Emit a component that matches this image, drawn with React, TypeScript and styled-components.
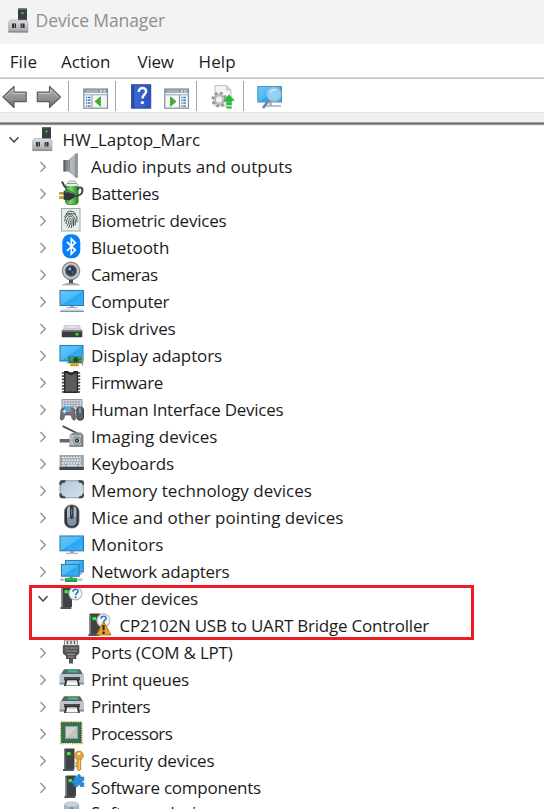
import React from "react";
import styled, { createGlobalStyle } from "styled-components";

const GlobalStyle = createGlobalStyle`
  * { box-sizing: border-box; }
  body { margin: 0; background: #fff; overflow: hidden; }
`;

const Window = styled.div`
  width: 544px;
  height: 809px;
  overflow: hidden;
  background: #fff;
  color: #1c1c1c;
  font: 17px/27px "Open Sans", "Noto Sans", sans-serif;
  display: flex;
  flex-direction: column;
  svg { display: block; flex: none; overflow: visible; }
`;

const TitleBar = styled.header`
  height: 44px;
  flex: none;
  display: flex;
  gap: 7.6px;
  padding-left: 8px;
  background: #f3f3f3;
`;

const Title = styled.h1`
  margin: 0;
  font-size: 17.5px;
  font-weight: 400;
  line-height: 41px;
  letter-spacing: -0.1px;
  color: #8e8e8e;
`;

const MenuBar = styled.nav`
  height: 34px;
  flex: none;
  display: flex;
  line-height: 35px;
  border-bottom: 1px solid #d6d8da;
`;

const MenuItem = styled.span<{ $gap: number; $width: number; $ls: number }>`
  margin-left: ${(p) => p.$gap}px;
  width: ${(p) => p.$width}px;
  letter-spacing: ${(p) => p.$ls}px;
  white-space: nowrap;
`;

const Toolbar = styled.div`
  height: 34px;
  flex: none;
  display: flex;
  border-top: 1px solid #c3c6c9;
`;

const Tool = styled.span<{ $gap: number }>`
  margin-left: ${(p) => p.$gap}px;
`;

const Separator = styled.span<{ $gap: number }>`
  width: 1px;
  height: 30px;
  margin: 2px 0 0 ${(p) => p.$gap}px;
  background: #a9a9a9;
`;

const Band = styled.div`
  height: 14px;
  flex: none;
  background: linear-gradient(#e3e3e3 0 1px, #f0f0f0 1px 10px, #a2a2a2 10px 11px, #707070 11px 12px, #929292 12px 13px, #f0f0f0 13px);
`;

const Tree = styled.div`
  display: flex;
  flex-direction: column;
`;

const Row = styled.div<{ $level: number }>`
  height: 27px;
  flex: none;
  display: flex;
  padding-left: ${(p) => [7, 36, 64][p.$level]}px;
  &:last-child { line-height: 24px; }
`;

const Label = styled.span<{ $ls: number; $indent: number }>`
  margin-left: ${(p) => p.$indent}px;
  letter-spacing: ${(p) => p.$ls}px;
  white-space: nowrap;
`;

const Group = styled.div`
  position: relative;
`;

const Highlight = styled.div`
  position: absolute;
  left: 29px;
  top: 0;
  width: 445px;
  height: 55px;
  border: 3px solid #ed1c24;
`;

const HiddenSvg = styled.svg`
  position: absolute;
`;

const Chevron = ({ open }: { open?: boolean }) => (
  <svg width="14" height="27" fill="none" stroke={open ? "#404040" : "#969696"} strokeWidth="1.5">
    <path d={open ? "M2.5 11.3l4.5 4.7 4.5-4.7" : "M4.5 9l4.7 4.9-4.7 4.9"} />
  </svg>
);

const Defs = () => (
  <HiddenSvg width="0" height="0">
    <defs>
      <linearGradient id="screen" x1="0" y1="0" x2="1" y2="1">
        <stop offset="0" stopColor="#66c6fb" /><stop offset=".5" stopColor="#4ab9fa" /><stop offset=".52" stopColor="#2ba7f6" /><stop offset="1" stopColor="#38b2fa" />
      </linearGradient>
      <linearGradient id="metal" x1="0" y1="0" x2="1" y2="0">
        <stop offset="0" stopColor="#7a7f84" /><stop offset=".5" stopColor="#b9bec3" /><stop offset="1" stopColor="#6e7479" />
      </linearGradient>
      <linearGradient id="plate" x1="0" y1="0" x2="0" y2="1">
        <stop offset="0" stopColor="#dddde1" /><stop offset="1" stopColor="#a4a5aa" />
      </linearGradient>
      <linearGradient id="arrow" x1="0" y1="0" x2="0" y2="1">
        <stop offset="0" stopColor="#aaa" /><stop offset=".5" stopColor="#969696" /><stop offset="1" stopColor="#707070" />
      </linearGradient>
      <linearGradient id="green" x1="0" y1="0" x2="1" y2="0">
        <stop offset="0" stopColor="#2b9b21" /><stop offset=".4" stopColor="#7add64" /><stop offset="1" stopColor="#1e8617" />
      </linearGradient>
      <linearGradient id="help" x1="0" y1="0" x2="1" y2="0">
        <stop offset="0" stopColor="#2745a8" /><stop offset=".2" stopColor="#3d67d4" /><stop offset="1" stopColor="#2c4fc0" />
      </linearGradient>
      <linearGradient id="pad" x1="0" y1="0" x2="1" y2="1">
        <stop offset="0" stopColor="#afc5d5" /><stop offset="1" stopColor="#d3e4ee" />
      </linearGradient>
    </defs>
  </HiddenSvg>
);

const Adapter = () => (
  <g>
    <rect x="11" y="1" width="9" height="12" fill="#3b3d3f" />
    <rect x="11" y="1" width="9" height="1.3" fill="#66696b" />
    <rect x="14.5" y="4.5" width="2" height="2" fill="#35cf42" />
    <path d="M3.2 12.5h16.2l1.6 2.5v9.7H1.6V15z" fill="url(#plate)" stroke="#97989d" strokeWidth=".5" />
    <path d="M1.6 23.5H21v1.4H1.6z" fill="#8c8d93" />
    <rect x="5" y="16" width="4" height="4.5" fill="#303136" />
    <rect x="13.6" y="16" width="4" height="4.5" fill="#303136" />
    <path d="M7.4 16v4.5M15.2 16v4.5" stroke="#999" strokeWidth=".9" />
  </g>
);

const Tower = ({ x = 0 }: { x?: number }) => (
  <g transform={`translate(${x} 0)`}>
    <path d="M1.5 2.5l1-1H12V22H1.5z" fill="#404346" />
    <path d="M1.5 2.5L3 3.5V22H1.5z" fill="#77797b" />
    <path d="M.5 22h10.8v2H.5z" fill="#505356" />
    <rect x="4.5" y="5" width="3.6" height="3.2" fill="#35ed3c" />
  </g>
);

const Question = () => (
  <g>
    <circle cx="15.4" cy="8.4" r="6.5" fill="#f4f7fa" stroke="#b4b8bd" strokeWidth="1.1" />
    <path d="M13 6.7c.1-3.4 5.4-3.2 5.1-.3-.2 1.8-2.5 1.8-2.5 3.8" stroke="#287abf" strokeWidth="1.6" fill="none" />
    <circle cx="15.6" cy="12.3" r="1" fill="#287abf" />
  </g>
);

const Printer = () => (
  <g>
    <path d="M4 3.3h16l3.3 5.5H.7z" fill="#5d6268" />
    <path d="M8 4.6h9.5l1 2h-11z" fill="#29cf77" />
    <path d="M-.4 9q0-1 1.2-1h22.2q1 0 1 1v9.5H-.4z" fill="#b9c4ce" />
    <path d="M-.4 16.5h24.4v2H-.4z" fill="#8894a0" />
    <path d="M4 11h16v3.5H4z" fill="#46494d" />
    <path d="M5.5 13h13l1.4 7H4z" fill="#303336" />
    <path d="M7.2 14.5h9.6l1.2 5H6z" fill="#fafafa" />
    <path d="M8.5 14.5H16v1.6H8.5z" fill="#d0d2d4" />
  </g>
);

const Screen = ({ x, y, w, h }: { x: number; y: number; w: number; h: number }) => (
  <rect x={x} y={y} width={w} height={h} fill="url(#screen)" stroke="#347ca5" strokeWidth="1.1" />
);

const icons: Record<string, React.ReactNode> = {
  root: <g transform="translate(1 0)"><Adapter /></g>,
  audio: (
    <g>
      <path d="M3.5 7h5.2v11.5H3.5z" fill="#7e858b" />
      <path d="M3.5 7h2v11.5h-2z" fill="#596067" />
      <path d="M8.7 7l6.8-6.5h2.2v24h-2.2L8.7 18.5z" fill="url(#metal)" />
      <path d="M15.2.7h2.6v23.8h-2.6z" fill="#90979d" />
      <path d="M11 6v13" stroke="#d2d6d9" />
    </g>
  ),
  battery: (
    <g>
      <rect x="8" y="1" width="8" height="4" rx="2" fill="#efecf6" stroke="#a5a6ad" />
      <rect x="5.5" y="3.5" width="12.7" height="21" rx="3" fill="url(#green)" stroke="#4f7550" strokeWidth=".8" />
      <path d="M5.8 6q0-2.3 2.5-2.3h7.2q2.5 0 2.5 2.3z" fill="#e5edeb" />
      <path d="M14 16c6.5 0 8.5-2 8.5-5.500q0-3-2.300-3T18 10M2 1.500C3 4 3.500 5.500 6 8" fill="none" stroke="#41454a" strokeWidth="2" />
      <path d="M-.8 13.300h5M-.8 17.500h5" stroke="#a77809" strokeWidth="2.400" />
      <path d="M-.8 12.900h5M-.8 17.100h5" stroke="#edc438" />
      <path d="M3.700 11l5.200-.8 5.500 3v4.400l-5 3-5.700-.8z" fill="#343739" />
      <path d="M5 12l4-.5 4 2" stroke="#8c9093" strokeWidth="1.200" fill="none" />
    </g>
  ),
  finger: (
    <g>
      <rect x="1.5" y="1.5" width="18.5" height="22.5" fill="#e4eeec" stroke="#97a8a5" />
      <g fill="none" stroke="#444948" strokeWidth="1">
        <path d="M6 7.5c1.5-4.5 8.3-4.5 9.5 0M4.5 10.3C6 5 15.5 5 16.9 10.5v4.8" />
        <path d="M4.8 14.5c0-9 10.3-8.8 10.4-.5v4.3M5.5 17c2-2 .5-7.500 5-7.500 3.700 0 3.200 5.800 2.900 10" />
        <path d="M6.700 19.300c3-2.800 1-7.700 3.800-7.700 2.200 0 1.800 5 .7 9.400M8.400 20.800c2-2.300 1.700-4 2-7" />
      </g>
    </g>
  ),
  bluetooth: (
    <g>
      <rect x="2.3" y=".2" width="18" height="24.1" rx="8" fill="#087ff5" />
      <path d="M6.9 7.8l8.400 8.300-4 3.900V4.800l4 3.900-8.400 8.300" fill="none" stroke="#fff" strokeWidth="1.7" />
    </g>
  ),
  camera: (
    <g>
      <path d="M9 18h4v4H9z" fill="#4c4e51" />
      <path d="M3 23.3q8-3.3 16 0z" fill="#8e9194" />
      <path d="M2.4 23.2h17v1.2h-17z" fill="#a0a2a5" />
      <circle cx="11" cy="9.8" r="8.6" fill="#d0d2d4" stroke="#88898b" strokeWidth="1.4" />
      <circle cx="11" cy="9.8" r="5.6" fill="#3d4248" stroke="#686b6e" strokeWidth="1.2" />
      <circle cx="11" cy="9.8" r="3.1" fill="#203752" />
      <circle cx="9.8" cy="8" r="1.5" fill="#9ab5d2" />
      <circle cx="12.5" cy="11.2" r="1.1" fill="#467ab1" />
    </g>
  ),
  computer: (
    <g>
      <Screen x={0} y={2.5} w={23.5} h={15} />
      <path d="M10.5 18h3v1.5h-3z" fill="#8b9bab" />
      <path d="M6.5 19h11v1.2h-11z" fill="#9baabd" />
      <path d="M1.5 21.5h21l1.5 2.3H0z" fill="#b8cadb" />
      <path d="M0 23h24v1H0z" fill="#7993ad" />
    </g>
  ),
  disk: (
    <g>
      <path d="M4.5 10h15l2.8 6H1.8z" fill="#cbccd0" />
      <path d="M6 11h12l1 2H5z" fill="#dedfe2" />
      <path d="M1.8 15.5h20.5v6.8H1.8z" fill="#3a3d40" />
      <path d="M1.8 15.5h20.5v1.2H1.8z" fill="#797c7f" />
      <circle cx="17" cy="19.3" r="1.5" fill="#36df3b" />
    </g>
  ),
  display: (
    <g>
      <Screen x={0} y={3.5} w={23} h={15.5} />
      <path d="M6 19.8h3v1.5H6z" fill="#bdc6ce" />
      <path d="M8.5 14.5h14v6.8h-14z" fill="#26754b" />
      <path d="M10 16h4M10 18h3M18 16h4M19 19h3" stroke="#7bb779" />
      <rect x="13.7" y="15.8" width="4" height="3.8" fill="#174a32" />
      <path d="M22.6 13.5v10" stroke="#92969a" strokeWidth="1.3" />
      <path d="M10 21.3h9v2.8h-9z" fill="#eeb42c" />
      <path d="M12 21.3v3M14.2 21.3v3M16.4 21.3v3" stroke="#bb7a14" strokeWidth=".8" />
    </g>
  ),
  firmware: (
    <g>
      <path d="M2 4h18M2 7.2h18M2 10.4h18M2 13.6h18M2 16.8h18M2 20h18M2 23h18" stroke="#343434" strokeWidth="1.7" />
      <path d="M1.4 4h2M1.4 7.2h2M1.4 10.4h2M1.4 13.6h2M1.4 16.8h2M1.4 20h2M18.8 4h2M18.8 7.2h2M18.8 10.4h2M18.8 13.6h2M18.8 16.8h2M18.8 20h2" stroke="#878787" strokeWidth=".7" />
      <path d="M4 2h4.2q2.8 4.5 5.6 0H18v22H4z" fill="#262727" />
      <path d="M5.300 4.500h2.200q3.500 3.500 7 0h2.200v18H5.300z" fill="#5b5d5f" />
    </g>
  ),
  hid: (
    <g>
      <path d="M2 3.5h20v11H2z" fill="#cbd0d5" stroke="#8d969f" />
      <path d="M4 5.8h16M4 8.3h16M4 10.6h16" stroke="#8d98a2" strokeWidth="1.2" strokeDasharray="1.8 1" />
      <path d="M1 14q.8-2.5 4-2.5h6q3 0 3.8 2.5l.8 9q-1.5 2.5-3.2 0l-1.3-4H5l-1.4 4q-1.8 2.4-3.4 0z" fill="#67727c" stroke="#46505a" strokeWidth=".7" />
      <path d="M4.6 11h6.6v5H4.6z" fill="#48acf0" />
      <path d="M10 12.5l3.5 3.5-3 1z" fill="#e85832" />
      <path d="M4.3 13.5v4M2.5 15.5h4" stroke="#edf1f4" />
      <rect x="16.8" y="11" width="6.7" height="13.2" rx="3" fill="#59636e" stroke="#323b44" />
      <path d="M20 11v6" stroke="#b7c4d0" />
    </g>
  ),
  imaging: (
    <g>
      <path d="M3 2.2l18 9v1.8l-18.7-9z" fill="#484b4e" />
      <path d="M9.3 12h14v11.7h-14z" fill="#b9bcbf" />
      <path d="M9.3 12h14l-2-2.5h-8z" fill="#898d91" />
      <path d="M21.3 12h2v11.7h-14v-1.5h12z" fill="#777b7e" />
      <path d="M-.3 16h10v3.5h-10z" fill="#64676a" />
      <circle cx="17" cy="17.6" r="3.7" fill="#e1e3e5" stroke="#777b7f" />
      <circle cx="17" cy="17.6" r="2.3" fill="#263f42" />
      <circle cx="17" cy="17.6" r=".8" fill="#79c1a1" />
    </g>
  ),
  keyboard: (
    <g>
      <rect x="-.5" y="5" width="24.3" height="15" fill="#9da7b0" />
      <path d="M-.5 17h24.3v3H-.5z" fill="#414950" />
      <path d="M2 7.5h19.5M3 10.3h18M2 13h19.5" stroke="#eef1f2" strokeWidth="1.7" strokeDasharray="1.8 1" />
      <path d="M7 15.4h10M2 15.4h3M19 15.4h2.5" stroke="#e2e6e9" strokeWidth="1.2" />
    </g>
  ),
  memory: (
    <g>
      <rect x="0" y="3.7" width="23.3" height="17" rx="2" fill="url(#pad)" stroke="#8e999f" strokeWidth="1" />
      <path d="M-.5 8V5.500q0-2.200 2.400-2.200h4.100L4.500 6H2L1.500 8zM18 3.200h3.700q2.200 0 2.200 2.300V8L22 7.500V6h-2.500zM-.5 16.500V19q0 2.300 2.400 2.300h4.100l-1.700-2.600H2v-2.200zM18 21.300h3.500q2.400 0 2.400-2.300v-2.500L22 17v1.700h-2z" fill="#44494e" />
    </g>
  ),
  mouse: (
    <g>
      <rect x="4.5" y="1" width="14.5" height="23" rx="6.5" fill="#2e3338" stroke="#68717a" strokeWidth=".8" />
      <path d="M7 6q0-3.5 3-3.8V13H7zM13.5 2.2q3 .5 3 4V13h-3z" fill="#aab8c4" />
      <path d="M7 13h9.5v4q0 5-4.7 5T7 17z" fill="#8193a4" />
      <rect x="10.2" y="3.5" width="3" height="11.5" rx="1" fill="#393e43" />
      <path d="M11.7 5v6" stroke="#78828b" />
    </g>
  ),
  monitor: (
    <g>
      <Screen x={0} y={5} w={23.5} h={14.8} />
      <path d="M10.5 20h3v2h-3z" fill="#8393a2" />
      <path d="M6 21.7h12V23H6z" fill="#a6b5c6" />
    </g>
  ),
  network: (
    <g>
      <Screen x={5.5} y={2.5} w={17.8} h={11.5} />
      <path d="M12 15h10v1.7H12z" fill="#9eb1c3" />
      <Screen x={1.5} y={6.5} w={17.7} h={11.7} />
      <path d="M9.5 18.5h3v2h-3z" fill="#65846f" />
      <path d="M0 20.5h22.5v2.4H0z" fill="#b5c9bb" />
      <path d="M5 19.8h12v4H5z" fill="#2cb95d" />
      <path d="M5 22.5h12v1.3H5z" fill="#178740" />
    </g>
  ),
  other: <g><Tower /><Question /></g>,
  warning: (
    <g>
      <Tower />
      <Question />
      <path d="M15.6 9.5L23 23H8.2z" fill="#e9a321" stroke="#9c6510" strokeWidth=".8" strokeLinejoin="round" />
      <path d="M15.6 13v5.3" stroke="#24211c" strokeWidth="2" />
      <circle cx="15.6" cy="20.8" r="1.2" fill="#24211c" />
    </g>
  ),
  port: (
    <g>
      <path d="M4.5 1h13v6h-13z" fill="#e3e4e5" stroke="#8d8f91" />
      <path d="M7.5 2v3M11 2v3M14.5 2v3" stroke="#555" strokeWidth="1.3" />
      <path d="M2.8 6.3h16.5v8.2l-3 2.5v3h-3.3v4.5H9V20H6v-3l-3.2-2.5z" fill="#515355" />
      <path d="M4.8 9h12.5M5.3 12h11.5M7.3 15.3h7.5M8 18h6" stroke="#919395" strokeWidth="1.2" />
    </g>
  ),
  printer: <Printer />,
  processor: (
    <g>
      <rect x="1" y="2" width="20.7" height="21.3" fill="none" stroke="#c7a550" strokeWidth="2" strokeDasharray="1.3 1.1" />
      <rect x="1.7" y="2.8" width="19.3" height="19.7" fill="#347352" stroke="#235b3c" strokeWidth=".8" />
      <rect x="5.5" y="6.5" width="12" height="12" fill="#d0d3d2" stroke="#8fa096" />
      <path d="M6 18L17 7v11z" fill="#bfc3c2" />
    </g>
  ),
  security: (
    <g>
      <Tower x={2.5} />
      <g fill="#e3a83c" stroke="#b27920" strokeWidth=".8">
        <path d="M17.2 11h3.5v11.5L19 24l-1.8-2v-2l-2-1 2-1.5-1.7-1.6 1.7-1z" />
        <circle cx="19" cy="8.5" r="4.4" />
      </g>
      <circle cx="19" cy="6.7" r="1.3" fill="#fff6dc" />
      <path d="M19.5 12.5v10" stroke="#f6cf7b" />
    </g>
  ),
  component: (
    <g>
      <Tower x={4} />
      <path d="M14 3h3.500c-1-3.500 3.700-3.500 2.700 0h3.600v3.500c-2.500-.7-2.500 3 0 2.300V12.500h-3.600c.7-2.500-3-2.500-2.500 0H14V9.300c-3 .7-3-3.500 0-2.800z" fill="#2c8ddd" stroke="#1872bd" strokeWidth=".7" />
    </g>
  ),
  software: (
    <g>
      <path d="M4 5q0-4.5 7.6-4.5T19.2 5v16H4z" fill="#aab6bf" />
      <ellipse cx="11.6" cy="3.5" rx="6" ry="2.5" fill="#c9d3da" />
      <circle cx="11.6" cy="7.2" r="1.8" fill="#519acb" />
    </g>
  ),
};

interface Item {
  label: string;
  icon: string;
  ls: number;
}

const before: Item[] = [
  { label: "Audio inputs and outputs", icon: "audio", ls: 0.01 },
  { label: "Batteries", icon: "battery", ls: -0.34 },
  { label: "Biometric devices", icon: "finger", ls: -0.23 },
  { label: "Bluetooth", icon: "bluetooth", ls: 0 },
  { label: "Cameras", icon: "camera", ls: -0.5 },
  { label: "Computer", icon: "computer", ls: -0.24 },
  { label: "Disk drives", icon: "disk", ls: -0.13 },
  { label: "Display adaptors", icon: "display", ls: -0.12 },
  { label: "Firmware", icon: "firmware", ls: -0.38 },
  { label: "Human Interface Devices", icon: "hid", ls: -0.27 },
  { label: "Imaging devices", icon: "imaging", ls: 0.02 },
  { label: "Keyboards", icon: "keyboard", ls: -0.12 },
  { label: "Memory technology devices", icon: "memory", ls: 0 },
  { label: "Mice and other pointing devices", icon: "mouse", ls: 0 },
  { label: "Monitors", icon: "monitor", ls: 0.1 },
  { label: "Network adapters", icon: "network", ls: -0.26 },
];

const after: Item[] = [
  { label: "Ports (COM & LPT)", icon: "port", ls: -0.2 },
  { label: "Print queues", icon: "printer", ls: -0.25 },
  { label: "Printers", icon: "printer", ls: -0.44 },
  { label: "Processors", icon: "processor", ls: -0.53 },
  { label: "Security devices", icon: "security", ls: -0.18 },
  { label: "Software components", icon: "component", ls: -0.23 },
  { label: "Software devices", icon: "software", ls: -0.2 },
];

const IconCell = styled.span<{ $gap: number }>`
  margin-left: ${(p) => p.$gap}px;
`;

function TreeRow({ item, level = 1, open, leaf }: { item: Item; level?: number; open?: boolean; leaf?: boolean }) {
  return (
    <Row $level={level}>
      {leaf ? null : <Chevron open={open} />}
      <IconCell $gap={leaf ? 24 : level === 0 ? 9 : 10}>
        <svg width="24" height="27">{icons[item.icon]}</svg>
      </IconCell>
      <Label $indent={level === 0 ? 8.5 : level === 2 ? 7.4 : 7.1} $ls={item.ls}>{item.label}</Label>
    </Row>
  );
}

const Arrow = ({ flip }: { flip?: boolean }) => (
  <svg width="25" height="33">
    <path
      transform={flip ? "matrix(-1 0 0 1 24.5 0)" : undefined}
      d="M1 18L12 7.5v5.7h12.2v9.5H12v5.8z"
      fill="url(#arrow)" stroke="#5d5d5d" strokeWidth="1.2" strokeLinejoin="round"
    />
    <path transform={flip ? "matrix(-1 0 0 1 24.5 0)" : undefined} d="M2.8 18l8-7.6v4h12.2" fill="none" stroke="#c5c5c5" />
  </svg>
);

const Pane = ({ flip }: { flip?: boolean }) => (
  <svg width="25" height="33">
    <rect x=".8" y="10" width="23.7" height="19.2" fill="#f5f6f7" stroke="#868d96" strokeWidth="1.2" />
    <path d="M1 10.2h23.4v3.5H1z" fill="#8995a3" />
    <path d="M3 12h12" stroke="#c4ccd5" />
    <path d="M17 12h1.7M20.5 12h1.7" stroke="#fff" strokeWidth="1.5" />
    <path d="M1 15.7h23.4" stroke="#b3bbc4" strokeWidth="1.4" />
    <g transform={flip ? "translate(14.4 0)" : undefined}>
      <path d="M3 18.5h4.5M3 21.3h4.5M3 24.1h4.5M3 26.9h4.5" stroke="#3479be" strokeWidth="1.5" strokeDasharray="1.2 .7 2.6" />
    </g>
    <path d={flip ? "M15.5 16v13" : "M9 16v13"} stroke="#8b929b" />
    <path d={flip ? "M6.5 17.8l5.5 4.7-5.5 4.8z" : "M17.5 17.8L12 22.5l5.5 4.8z"} fill="#38b326" stroke="#259019" strokeWidth=".6" />
  </svg>
);

export default function App() {
  return (
    <Window>
      <GlobalStyle />
      <Defs />
      <TitleBar>
        <svg width="20" height="44"><g transform="translate(-1 7.5)"><Adapter /></g></svg>
        <Title>Device Manager</Title>
      </TitleBar>
      <MenuBar>
        <MenuItem $gap={9.7} $width={51.3} $ls={0.15}>File</MenuItem>
        <MenuItem $gap={0} $width={76.6} $ls={-0.1}>Action</MenuItem>
        <MenuItem $gap={0} $width={61} $ls={-0.3}>View</MenuItem>
        <MenuItem $gap={0} $width={40} $ls={0.1}>Help</MenuItem>
      </MenuBar>
      <Toolbar>
        <Tool $gap={2}><Arrow /></Tool>
        <Tool $gap={10}><Arrow flip /></Tool>
        <Separator $gap={6} />
        <Tool $gap={14}><Pane /></Tool>
        <Separator $gap={7} />
        <Tool $gap={15}>
          <svg width="20" height="33">
            <rect x=".5" y="5.7" width="19.3" height="23.5" fill="url(#help)" stroke="#263f87" strokeWidth=".8" />
            <path d="M2.7 6v23" stroke="#294798" />
            <path d="M7.8 13c-.3-5.3 7.7-5 7.3-.5-.2 3-3.6 3.2-3.6 7" fill="none" stroke="#f7f8fc" strokeWidth="2.5" />
            <circle cx="11.4" cy="23.6" r="1.7" fill="#f7f8fc" />
          </svg>
        </Tool>
        <Tool $gap={13}><Pane flip /></Tool>
        <Separator $gap={7} />
        <Tool $gap={14}>
          <svg width="24" height="33">
            <path d="M4 6.5h11.5l4.5 4.5v16H4z" fill="#f4f4f4" stroke="#bdbfc1" />
            <path d="M15.5 6.5V11H20z" fill="#d4d6d8" stroke="#b4b6b8" strokeWidth=".7" />
            <circle cx="8.2" cy="20.5" r="6.5" fill="none" stroke="#92969a" strokeWidth="2.7" strokeDasharray="2.55 2.55" />
            <circle cx="8.2" cy="20.5" r="4.5" fill="#f5f5f5" stroke="#999da0" strokeWidth="2.6" />
            <circle cx="8.2" cy="20.5" r="4.5" fill="none" stroke="#d7dadd" />
            <path d="M18 15.5l6 6.3h-3.2v2h-5.4v-2H12z" fill="#25bd32" />
            <path d="M15.3 25h5.5M15.3 28.5h5.5" stroke="#25bd32" strokeWidth="2" />
          </svg>
        </Tool>
        <Separator $gap={7.5} />
        <Tool $gap={13.5}>
          <svg width="26" height="33">
            <rect x=".8" y="7.5" width="23.7" height="15.5" fill="url(#screen)" stroke="#4796bf" />
            <path d="M12 23h3v4h-3z" fill="#a9bac7" />
            <path d="M8 27h16" stroke="#9eafbf" strokeWidth="1.5" />
            <path d="M12.5 20.5L6 29" stroke="#718696" strokeWidth="2.7" />
            <circle cx="17" cy="15.2" r="6.8" fill="#8ed3f4" stroke="#a7bdcb" strokeWidth="1.5" />
            <path d="M13 14q2-4 6-3" stroke="#c2ebff" strokeWidth="1.5" fill="none" />
          </svg>
        </Tool>
      </Toolbar>
      <Band />
      <Tree>
        <TreeRow level={0} open item={{ label: "HW_Laptop_Marc", icon: "root", ls: -0.06 }} />
        {before.map((item) => <TreeRow key={item.label} item={item} />)}
        <Group>
          <TreeRow open item={{ label: "Other devices", icon: "other", ls: -0.17 }} />
          <TreeRow level={2} leaf item={{ label: "CP2102N USB to UART Bridge Controller", icon: "warning", ls: -0.22 }} />
          <Highlight />
        </Group>
        {after.map((item) => <TreeRow key={item.label} item={item} />)}
      </Tree>
    </Window>
  );
}
